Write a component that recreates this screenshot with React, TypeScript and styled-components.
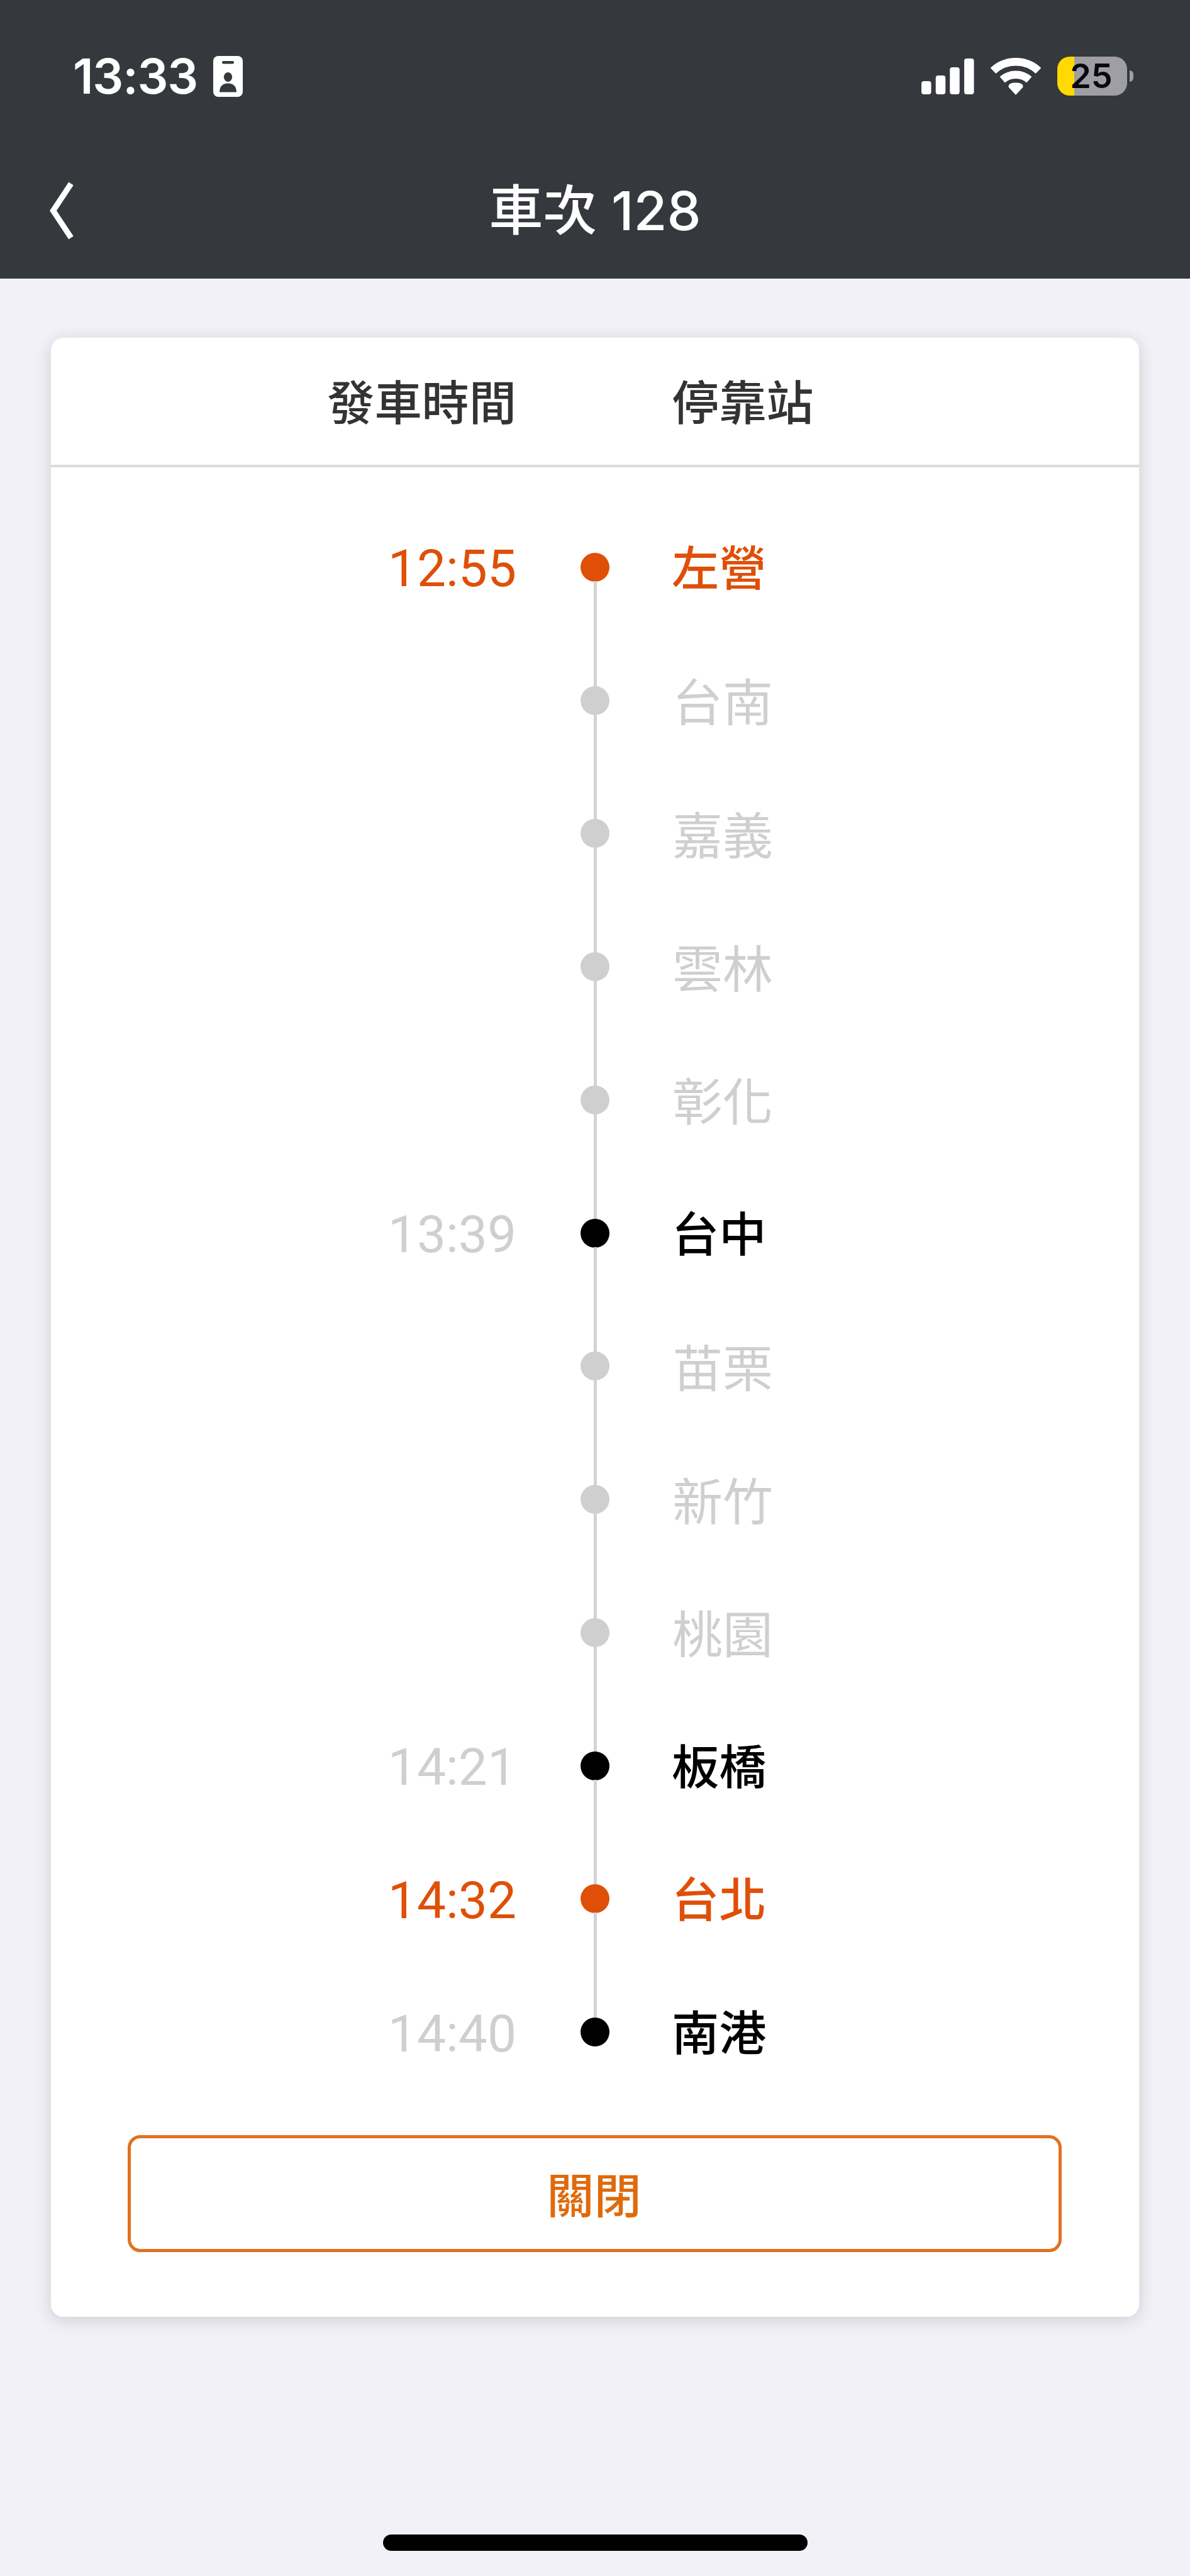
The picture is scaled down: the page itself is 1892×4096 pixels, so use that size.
import React from "react";
import styled, { createGlobalStyle } from "styled-components";

type Tone = "active" | "stop" | "skip";

interface Stop {
  name: string;
  time?: string;
  tone: Tone;
}

const stops: Stop[] = [
  { name: "左營", time: "12:55", tone: "active" },
  { name: "台南", tone: "skip" },
  { name: "嘉義", tone: "skip" },
  { name: "雲林", tone: "skip" },
  { name: "彰化", tone: "skip" },
  { name: "台中", time: "13:39", tone: "stop" },
  { name: "苗栗", tone: "skip" },
  { name: "新竹", tone: "skip" },
  { name: "桃園", tone: "skip" },
  { name: "板橋", time: "14:21", tone: "stop" },
  { name: "台北", time: "14:32", tone: "active" },
  { name: "南港", time: "14:40", tone: "stop" },
];

const toneColor: Record<Tone, string> = {
  active: "#df4f08",
  stop: "#000000",
  skip: "#cfcfcf",
};

const cjk = `"Noto Sans CJK TC", sans-serif`;

const GlobalStyle = createGlobalStyle`
  * { box-sizing: border-box; }
  body { margin: 0; background: #f2f1f7; }
`;

const Screen = styled.div`
  display: flex;
  flex-direction: column;
  width: 1892px;
  height: 4096px;
  overflow: hidden;
  background: #f2f1f7;
  font-family: ${cjk};
`;

const Header = styled.header`
  flex: none;
  height: 443px;
  background: #35383d;
  color: #fff;
`;

const StatusBar = styled.div`
  display: flex;
  justify-content: space-between;
  align-items: center;
  height: 242px;
  padding: 0 90px 0 116px;
`;

const StatusGroup = styled.div<{ $gap: number }>`
  display: flex;
  align-items: center;
  gap: ${(p) => p.$gap}px;
`;

const Clock = styled.span`
  width: 198px;
  font: 600 77px/100px Inter, sans-serif;
  letter-spacing: -1.2px;
  white-space: nowrap;
`;

const Battery = styled.div`
  display: flex;
  align-items: center;
  justify-content: center;
  width: 111px;
  height: 62px;
  padding-right: 3px;
  border-radius: 20px;
  background: linear-gradient(90deg, #ffd900 27px, #9f9ea5 27px);
  color: #08090c;
  font: 600 54px/62px Inter, sans-serif;
`;

const BatteryCap = styled.div`
  width: 6px;
  height: 18px;
  margin-left: -21px;
  border-radius: 0 6px 6px 0;
  background: #9f9ea5;
`;

const NavBar = styled.div`
  display: grid;
  grid-template-columns: 200px 1fr 200px;
  align-items: center;
  height: 186px;
`;

const BackButton = styled.button`
  display: flex;
  padding: 0 0 0 76px;
  border: 0;
  background: none;
`;

const Title = styled.h1`
  margin: 0;
  text-align: center;
  font: 500 85.8px/120px Inter, ${cjk};
  white-space: pre;
`;

const Card = styled.main`
  flex: none;
  display: flex;
  flex-direction: column;
  width: 1730px;
  height: 3147px;
  margin: 94px auto 0 81px;
  border-radius: 20px;
  background: #fff;
  box-shadow: 0 5px 26px rgba(30, 28, 40, 0.17);
`;

const columns = `
  display: grid;
  grid-template-columns: 741px 248px 1fr;
  align-items: center;
`;

const TableHead = styled.div`
  ${columns}
  height: 206px;
  padding-bottom: 4px;
  border-bottom: 4px solid #dbdbdb;
  color: #333;
  font-size: 75.2px;
  font-weight: 500;
  line-height: 100px;
`;

const TimeHeading = styled.span`
  padding-right: 1px;
  text-align: right;
`;

const StationHeading = styled.span`
  grid-column: 3;
  margin-left: -2px;
`;

const StopList = styled.ol`
  margin: 0;
  padding: 53px 0 0;
  list-style: none;
`;

const StopRow = styled.li`
  ${columns}
  height: 211.75px;
`;

const Time = styled.span<{ $active: boolean }>`
  padding: 5px 1px 0 0;
  text-align: right;
  font: 400 82px/100px Roboto, sans-serif;
  color: ${(p) => (p.$active ? "#df4f08" : "#cfcfcf")};
`;

const Track = styled.span`
  display: grid;
  grid-template-rows: 1fr auto 1fr;
  justify-items: center;
  height: 100%;
`;

const Segment = styled.i<{ $hidden: boolean }>`
  width: 5px;
  background: ${(p) => (p.$hidden ? "transparent" : "#d3d3d3")};
`;

const Dot = styled.i<{ $tone: Tone }>`
  width: 46px;
  height: 46px;
  margin: -1px 0;
  border-radius: 50%;
  background: ${(p) => toneColor[p.$tone]};
`;

const Station = styled.span<{ $tone: Tone }>`
  padding-bottom: ${(p) => (p.$tone === "skip" ? 5 : 6)}px;
  margin-left: ${(p) => (p.$tone === "skip" ? -1 : -2)}px;
  font-size: ${(p) => (p.$tone === "skip" ? 80 : 75.2)}px;
  font-weight: ${(p) => (p.$tone === "skip" ? 400 : 500)};
  line-height: 100px;
  color: ${(p) => toneColor[p.$tone]};
`;

const CloseButton = styled.button`
  flex: none;
  width: 1485px;
  height: 186px;
  margin: 58px 0 0 122px;
  padding: 0 2px 3px 0;
  border: 5px solid #e2711d;
  border-radius: 20px;
  background: #fff;
  color: #df6a0c;
  font: 500 75.2px/100px ${cjk};
`;

const HomeIndicator = styled.div`
  width: 675px;
  height: 26px;
  margin: auto auto 40px;
  border-radius: 13px;
  background: #000;
`;

const IdCardIcon = () => (
  <svg width="47" height="65" viewBox="0 0 47 65">
    <rect width="47" height="65" rx="8" fill="#fff" />
    <rect x="14" y="8" width="19" height="4.5" rx="2.2" fill="#35383d" />
    <ellipse cx="23.5" cy="33.5" rx="6.6" ry="7.6" fill="#35383d" />
    <path d="M10 57.5 C10 48.500 15 43.500 23.500 43.500 C32 43.500 37 48.500 37 57.500 Z" fill="#35383d" />
  </svg>
);

const SignalIcon = () => (
  <svg width="84" height="57" viewBox="0 0 84 57" fill="#fff">
    <rect x="0" y="36" width="15.500" height="21" rx="4" />
    <rect x="22.700" y="27" width="15.500" height="30" rx="4" />
    <rect x="45.200" y="14" width="15.500" height="43" rx="4" />
    <rect x="68" y="0" width="15.500" height="57" rx="4" />
  </svg>
);

const WifiIcon = () => (
  <svg width="82" height="59" viewBox="-41 -59 82 59" fill="none" stroke="#fff">
    <path d="M-36 -38.500 A52.600 52.600 0 0 1 36 -38.500" strokeWidth="12.600" />
    <path d="M-21.300 -24.200 A32.300 32.300 0 0 1 21.300 -24.200" strokeWidth="12.600" />
    <path d="M0 -1.500 L-10.500 -13 Q-11 -18.500 0 -18.500 Q11 -18.500 10.500 -13 Z" fill="#fff" strokeWidth="2" strokeLinejoin="round" />
  </svg>
);

const BackIcon = () => (
  <svg width="44" height="96" viewBox="0 0 44 96" fill="none" stroke="#fff" strokeWidth="9">
    <path d="M37 5 L8.500 48 L37 91" />
  </svg>
);

export default function App() {
  return (
    <Screen>
      <GlobalStyle />
      <Header>
        <StatusBar>
          <StatusGroup $gap={25}>
            <Clock>13:33</Clock>
            <IdCardIcon />
          </StatusGroup>
          <StatusGroup $gap={25}>
            <SignalIcon />
            <WifiIcon />
            <Battery>25</Battery>
            <BatteryCap />
          </StatusGroup>
        </StatusBar>
        <NavBar>
          <BackButton aria-label="返回">
            <BackIcon />
          </BackButton>
          <Title>車次 128</Title>
        </NavBar>
      </Header>
      <Card>
        <TableHead>
          <TimeHeading>發車時間</TimeHeading>
          <StationHeading>停靠站</StationHeading>
        </TableHead>
        <StopList>
          {stops.map((stop, i) => (
            <StopRow key={stop.name}>
              <Time $active={stop.tone === "active"}>{stop.time}</Time>
              <Track>
                <Segment $hidden={i === 0} />
                <Dot $tone={stop.tone} />
                <Segment $hidden={i === stops.length - 1} />
              </Track>
              <Station $tone={stop.tone}>{stop.name}</Station>
            </StopRow>
          ))}
        </StopList>
        <CloseButton>關閉</CloseButton>
      </Card>
      <HomeIndicator />
    </Screen>
  );
}
